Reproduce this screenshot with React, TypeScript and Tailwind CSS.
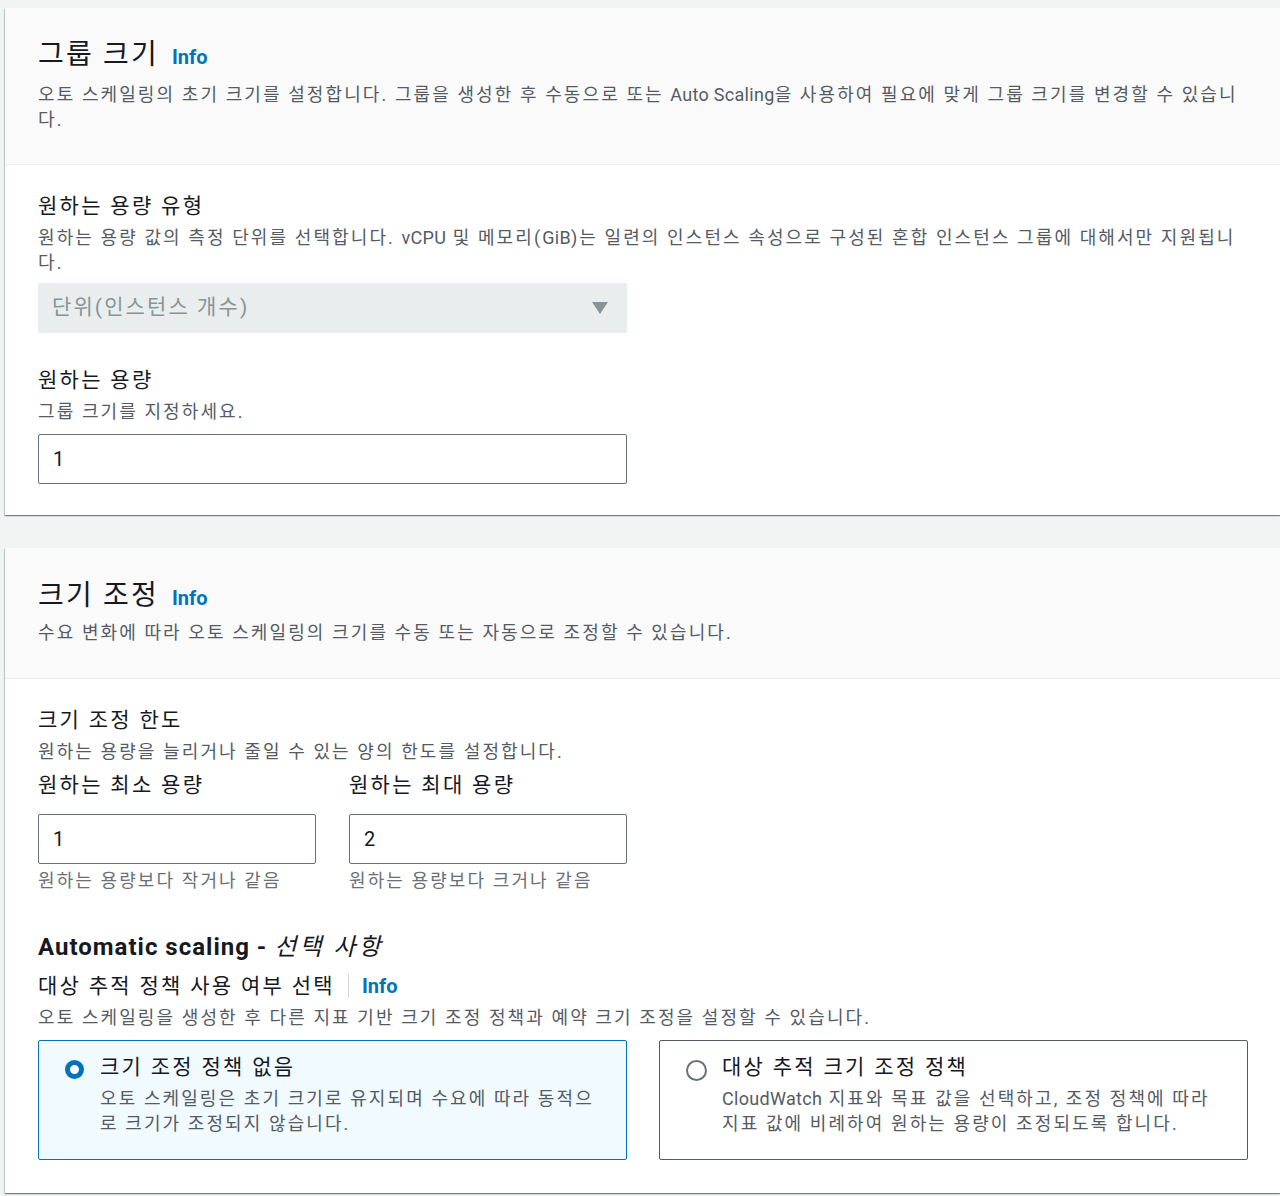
const font = { fontFamily: '"Roboto", "Noto Sans CJK KR", sans-serif' };

const Info = ({ className = "" }: { className?: string }) => (
  <span className={`font-bold text-[20px] text-[#0073bb] ${className}`}>Info</span>
);

const Line = ({ children }: { children: React.ReactNode }) => (
  <span className="block whitespace-nowrap">{children}</span>
);

// latin words keep normal spacing, only hangul is spread
const En = ({ children }: { children: React.ReactNode }) => (
  <span className="tracking-[0.3px]">{children}</span>
);

const TextInput = ({ value, className = "" }: { value: string; className?: string }) => (
  <div
    className={`h-[50px] border border-[#687078] rounded-[2px] bg-white flex items-center px-[14px] text-[20px] text-[#16191f] ${className}`}
  >
    {value}
  </div>
);

const App = () => {
  return (
    <div className="min-h-screen bg-[#f2f3f3] pt-2 pl-[5px] pb-1 overflow-hidden" style={font}>
      {/* 그룹 크기 */}
      <div className="bg-white shadow-[0_1px_1px_0_rgba(0,28,36,0.35),1px_1px_1px_0_rgba(0,28,36,0.15),-1px_1px_1px_0_rgba(0,28,36,0.15)]">
        <div className="bg-[#fafafa] border-b border-[#eaeded] pl-[33px] pr-[32px] pt-[29px] pb-[32px]">
          <div className="flex items-baseline gap-[13px] h-[36px] leading-[36px]">
            <span className="text-[28px] tracking-[2.2px] text-[#16191f]">그룹 크기</span>
            <Info />
          </div>
          <div className="mt-[9px] text-[18px] tracking-[2.1px] leading-[25px] text-[#545b64]">
            <Line>
              오토 스케일링의 초기 크기를 설정합니다. 그룹을 생성한 후 수동으로 또는 <En>Auto Scaling</En>을 사용하여 필요에 맞게 그룹 크기를 변경할 수 있습니
            </Line>
            <Line>다.</Line>
          </div>
        </div>
        <div className="pl-[33px] pr-[32px] pt-[26px] pb-[31px]">
          <div className="text-[21px] tracking-[2.3px] leading-[30px] text-[#16191f]">원하는 용량 유형</div>
          <div className="mt-[4px] text-[18px] tracking-[2.1px] leading-[25px] text-[#545b64]">
            <Line>
              원하는 용량 값의 측정 단위를 선택합니다. <En>vCPU</En> 및 메모리(<En>GiB</En>)는 일련의 인스턴스 속성으로 구성된 혼합 인스턴스 그룹에 대해서만 지원됩니
            </Line>
            <Line>다.</Line>
          </div>
          <div className="mt-[8px] w-[589px] h-[50px] rounded-[2px] bg-[#eaeded] flex items-center justify-between pl-[14px] pr-[19px]">
            <span className="text-[21px] tracking-[2.1px] text-[#879596]">단위(인스턴스 개수)</span>
            <svg width="16" height="12" viewBox="0 0 16 12">
              <path d="M0 0 H16 L8 12 Z" fill="#879596" />
            </svg>
          </div>

          <div className="mt-[32px] text-[21px] tracking-[2.3px] leading-[30px] text-[#16191f]">원하는 용량</div>
          <div className="mt-[4px] text-[18px] tracking-[2.1px] leading-[25px] text-[#545b64]">그룹 크기를 지정하세요.</div>
          <TextInput value="1" className="mt-[10px] w-[589px]" />
        </div>
      </div>

      {/* 크기 조정 */}
      <div className="mt-[33px] bg-white shadow-[0_1px_1px_0_rgba(0,28,36,0.35),1px_1px_1px_0_rgba(0,28,36,0.15),-1px_1px_1px_0_rgba(0,28,36,0.15)]">
        <div className="bg-[#fafafa] border-b border-[#eaeded] pl-[33px] pr-[32px] pt-[30px] pb-[33px]">
          <div className="flex items-baseline gap-[13px] h-[36px] leading-[36px]">
            <span className="text-[28px] tracking-[2.2px] text-[#16191f]">크기 조정</span>
            <Info />
          </div>
          <div className="mt-[6px] text-[18px] tracking-[2.1px] leading-[25px] text-[#545b64]">
            수요 변화에 따라 오토 스케일링의 크기를 수동 또는 자동으로 조정할 수 있습니다.
          </div>
        </div>
        <div className="pl-[33px] pr-[32px] pt-[26px] pb-[33px]">
          <div className="text-[21px] tracking-[2.3px] leading-[30px] text-[#16191f]">크기 조정 한도</div>
          <div className="mt-[4px] text-[18px] tracking-[2.1px] leading-[25px] text-[#545b64]">
            원하는 용량을 늘리거나 줄일 수 있는 양의 한도를 설정합니다.
          </div>
          <div className="mt-[6px] flex gap-[33px]">
            <div className="w-[278px]">
              <div className="text-[21px] tracking-[2.3px] leading-[30px] text-[#16191f]">원하는 최소 용량</div>
              <TextInput value="1" className="mt-[14px]" />
              <div className="mt-[4px] text-[18px] tracking-[2.1px] leading-[25px] text-[#687078] whitespace-nowrap">
                원하는 용량보다 작거나 같음
              </div>
            </div>
            <div className="w-[278px]">
              <div className="text-[21px] tracking-[2.3px] leading-[30px] text-[#16191f]">원하는 최대 용량</div>
              <TextInput value="2" className="mt-[14px]" />
              <div className="mt-[4px] text-[18px] tracking-[2.1px] leading-[25px] text-[#687078] whitespace-nowrap">
                원하는 용량보다 크거나 같음
              </div>
            </div>
          </div>

          <div className="mt-[38px] text-[24px] tracking-[1px] leading-[32px] font-bold text-[#16191f]">
            Automatic scaling - <span className="italic font-normal tracking-[3px]">선택 사항</span>
          </div>
          <div className="mt-[8px] flex items-center h-[30px]">
            <span className="text-[21px] tracking-[2.3px] leading-[30px] text-[#16191f]">대상 추적 정책 사용 여부 선택</span>
            <span className="ml-[13px] mr-[13px] w-px h-[24px] bg-[#d5dbdb]" />
            <Info />
          </div>
          <div className="mt-[4px] text-[18px] tracking-[2.1px] leading-[25px] text-[#545b64]">
            오토 스케일링을 생성한 후 다른 지표 기반 크기 조정 정책과 예약 크기 조정을 설정할 수 있습니다.
          </div>

          <div className="mt-[10px] flex gap-[32px]">
            <div className="w-[589px] h-[120px] border border-[#0073bb] bg-[#f1faff] rounded-[2px] flex pl-[26px] pt-[11px]">
              <span className="mt-[8px] w-[19px] h-[19px] rounded-full border-[5px] border-[#0073bb] bg-white shrink-0" />
              <div className="ml-[16px]">
                <div className="text-[21px] tracking-[2.3px] leading-[30px] text-[#16191f]">크기 조정 정책 없음</div>
                <div className="mt-[4px] text-[18px] tracking-[2.1px] leading-[25px] text-[#545b64]">
                  <Line>오토 스케일링은 초기 크기로 유지되며 수요에 따라 동적으</Line>
                  <Line>로 크기가 조정되지 않습니다.</Line>
                </div>
              </div>
            </div>
            <div className="w-[589px] h-[120px] border border-[#545b64] bg-white rounded-[2px] flex pl-[26px] pt-[11px]">
              <span className="mt-[8px] w-[21px] h-[21px] rounded-full border-2 border-[#687078] bg-white shrink-0" />
              <div className="ml-[15px]">
                <div className="text-[21px] tracking-[2.3px] leading-[30px] text-[#16191f]">대상 추적 크기 조정 정책</div>
                <div className="mt-[4px] text-[18px] tracking-[2.1px] leading-[25px] text-[#545b64]">
                  <Line><En>CloudWatch</En> 지표와 목표 값을 선택하고, 조정 정책에 따라</Line>
                  <Line>지표 값에 비례하여 원하는 용량이 조정되도록 합니다.</Line>
                </div>
              </div>
            </div>
          </div>
        </div>
      </div>
    </div>
  );
};

export default App;
